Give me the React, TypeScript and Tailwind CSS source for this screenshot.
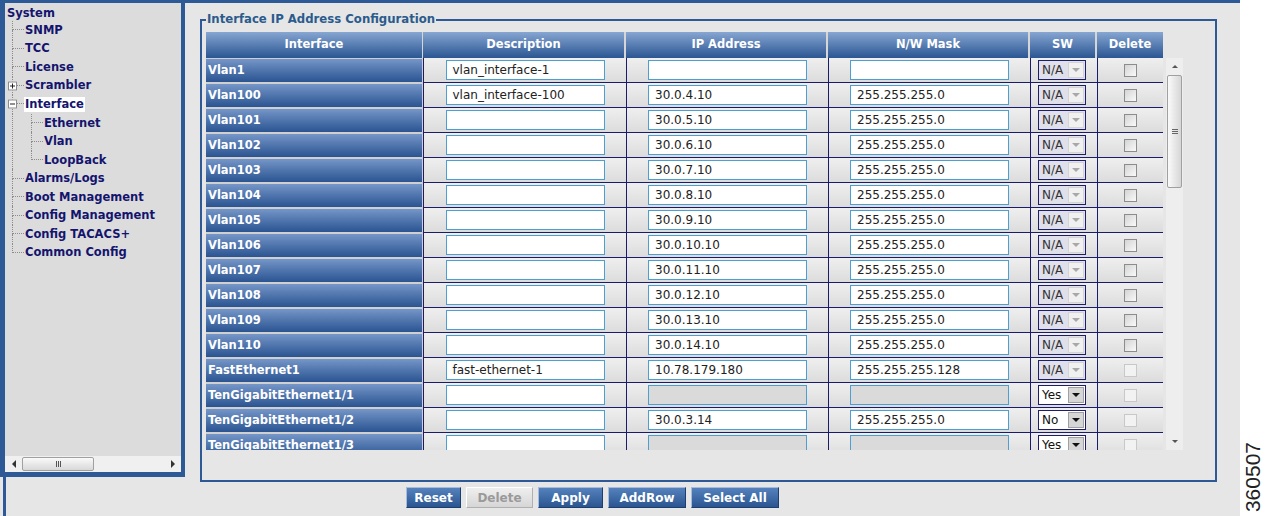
import React from 'react'

type Row = {
  name: string
  desc: string
  ip: string | null
  mask: string | null
  sw: string
  del: boolean
}

const rows: Row[] = [
  { name: 'Vlan1', desc: 'vlan_interface-1', ip: '', mask: '', sw: 'N/A', del: true },
  { name: 'Vlan100', desc: 'vlan_interface-100', ip: '30.0.4.10', mask: '255.255.255.0', sw: 'N/A', del: true },
  ...Array.from({ length: 10 }, (_, i) => ({
    name: `Vlan${101 + i}`,
    desc: '',
    ip: `30.0.${5 + i}.10`,
    mask: '255.255.255.0',
    sw: 'N/A',
    del: true,
  })),
  { name: 'FastEthernet1', desc: 'fast-ethernet-1', ip: '10.78.179.180', mask: '255.255.255.128', sw: 'N/A', del: false },
  { name: 'TenGigabitEthernet1/1', desc: '', ip: null, mask: null, sw: 'Yes', del: false },
  { name: 'TenGigabitEthernet1/2', desc: '', ip: '30.0.3.14', mask: '255.255.255.0', sw: 'No', del: false },
  { name: 'TenGigabitEthernet1/3', desc: '', ip: null, mask: null, sw: 'Yes', del: false },
]

function Connector({ last, toggle }: { last?: boolean; toggle?: '+' | '-' }) {
  return (
    <div className="relative flex w-[12px] shrink-0 flex-col">
      <div className="h-1/2 border-b border-l border-dotted border-[#8c8c8c]" />
      <div className={last ? 'h-1/2' : 'h-1/2 border-l border-dotted border-[#8c8c8c]'} />
      {toggle && (
        <span className="absolute left-[-4px] top-1/2 flex h-[9px] w-[9px] -translate-y-1/2 items-center justify-center border border-[#8c8c8c] bg-white">
          <span className="h-[1px] w-[5px] bg-[#222]" />
          {toggle === '+' && <span className="absolute h-[5px] w-[1px] bg-[#222]" />}
        </span>
      )}
    </div>
  )
}

function TreeRow({ label, last, toggle, selected }: { label: string; last?: boolean; toggle?: '+' | '-'; selected?: boolean }) {
  return (
    <div className="flex h-[18.55px]">
      <Connector last={last} toggle={toggle} />
      <div className="flex items-center">
        <span className={`px-[1px] leading-[15px] ${selected ? 'bg-white' : ''}`}>{label}</span>
      </div>
    </div>
  )
}

function Field({ value, disabled }: { value: string | null; disabled?: boolean }) {
  return (
    <div
      className={`flex h-[20px] w-[159px] items-center border border-[#4c9fd1] pl-[6px] text-[12px] text-[#222] ${
        disabled ? 'bg-[#dadada]' : 'bg-white'
      }`}
    >
      {value}
    </div>
  )
}

function Sw({ value }: { value: string }) {
  const na = value === 'N/A'
  return (
    <div className={`flex h-[20px] w-[48px] border border-[#1d1d6b] ${na ? 'bg-[#e0e0ea]' : 'bg-white'}`}>
      <span className={`flex-1 pl-[3px] text-[12px] leading-[18px] ${na ? 'text-[#333]' : 'text-[#111]'}`}>{value}</span>
      <span
        className={`my-[1px] mr-[1px] flex w-[16px] items-center justify-center border ${
          na ? 'border-[#d4d4d4] bg-[#f0f0f0]' : 'border-[#a0a0a0] bg-[#d6d6d6]'
        }`}
      >
        <span
          className={`h-0 w-0 border-x-[4px] border-t-[4px] border-x-transparent ${
            na ? 'border-t-[#a8a8a8]' : 'border-t-[#111]'
          }`}
        />
      </span>
    </div>
  )
}

function Cell({ w, children, left }: { w: string; children?: React.ReactNode; left?: boolean }) {
  return (
    <div
      className={`flex shrink-0 items-center border-b border-l border-[#1b1b6b] bg-linear-to-b from-[#efefef] to-[#dcdcdc] ${w} ${
        left ? 'justify-start pl-[7px]' : 'justify-center'
      }`}
    >
      {children}
    </div>
  )
}

const head = 'flex shrink-0 items-center justify-center bg-linear-to-b from-[#87a6d2] to-[#2a5692] font-bold text-white'

export default function App() {
  return (
    <div className="flex h-[516px] w-[1266px] overflow-hidden bg-white font-['DejaVu_Sans',Verdana,sans-serif] text-[11.5px]">
      {/* left tree column */}
      <div className="flex w-[185px] shrink-0 flex-col bg-[#e6e6e6]">
        <div className="flex h-[477px] flex-col border-b-[5px] border-l-[5px] border-r-[4px] border-t-[3px] border-[#2d5a96] bg-[#dcdcdc]">
          <div className="flex-1 pt-[4px] font-bold text-[#14146e]">
            <div className="flex h-[14px] items-center pl-[2px]">System</div>
            <div className="pl-[7px]">
              <TreeRow label="SNMP" />
              <TreeRow label="TCC" />
              <TreeRow label="License" />
              <TreeRow label="Scrambler" toggle="+" />
              <TreeRow label="Interface" toggle="-" selected />
              <div className="flex">
                <div className="w-[12px] shrink-0 border-l border-dotted border-[#8c8c8c]" />
                <div className="pl-[7px]">
                  <TreeRow label="Ethernet" />
                  <TreeRow label="Vlan" />
                  <TreeRow label="LoopBack" last />
                </div>
              </div>
              <TreeRow label="Alarms/Logs" />
              <TreeRow label="Boot Management" />
              <TreeRow label="Config Management" />
              <TreeRow label="Config TACACS+" />
              <TreeRow label="Common Config" last />
            </div>
          </div>
          {/* horizontal scrollbar */}
          <div className="flex h-[16px] items-center bg-[#f0f0f0]">
            <div className="flex w-[17px] justify-center">
              <span className="h-0 w-0 border-y-[4px] border-r-[4px] border-y-transparent border-r-[#333]" />
            </div>
            <div className="flex h-[14px] w-[72px] items-center justify-center gap-[1px] rounded-[2px] border border-[#a0a0a0] bg-linear-to-b from-[#fafafa] to-[#d8d8d8]">
              <span className="h-[6px] w-[1px] bg-[#555]" />
              <span className="h-[6px] w-[1px] bg-[#555]" />
              <span className="h-[6px] w-[1px] bg-[#555]" />
            </div>
            <div className="flex-1" />
            <div className="flex w-[17px] justify-center">
              <span className="h-0 w-0 border-y-[4px] border-l-[4px] border-y-transparent border-l-[#333]" />
            </div>
          </div>
        </div>
        <div className="ml-[3px] w-[3px] flex-1 bg-[#2d5a96]" />
      </div>

      {/* main area */}
      <div className="flex w-[1055px] shrink-0 flex-col border-t-[3px] border-[#2d5a96] bg-[#e6e6e6] pl-[15px]">
        <div className="mt-[16px] h-[463px] w-[1017px] border-2 border-[#2d5a96]">
          <div className="-mt-[9px] ml-[4px] w-fit bg-[#e6e6e6] px-[1px] text-[11.7px] font-bold leading-[14px] text-[#2b5b8c]">
            Interface IP Address Configuration
          </div>
          <div className="ml-[4px] mt-[6px]">
            {/* header */}
            <div className="flex h-[26px] w-[957px]">
              <div className={`${head} w-[217px] border-r border-[#d6d6d6]`}>Interface</div>
              <div className={`${head} w-[203px] border-r-2 border-[#d6d6d6]`}>Description</div>
              <div className={`${head} w-[202px] border-r-2 border-[#d6d6d6]`}>IP Address</div>
              <div className={`${head} w-[202px] border-r-2 border-[#d6d6d6]`}>N/W Mask</div>
              <div className={`${head} w-[67px] border-r-2 border-[#d6d6d6]`}>SW</div>
              <div className={`${head} w-[66px]`}>Delete</div>
            </div>
            {/* body + scrollbar */}
            <div className="flex">
              <div className="h-[392px] w-[957px] overflow-hidden bg-[#e6e6e6]">
                {rows.map((r) => (
                  <div key={r.name} className="flex h-[25px]">
                    <div className="w-[217px] shrink-0 bg-[#d0d0d0] pb-[1px] pr-[1px] pt-[1px]">
                      <div className="flex h-full items-center bg-linear-to-b from-[#7596c8] to-[#2a5491] pl-[2px] font-bold text-white">
                        {r.name}
                      </div>
                    </div>
                    <Cell w="w-[203px]">
                      <Field value={r.desc} />
                    </Cell>
                    <Cell w="w-[202px]">
                      <Field value={r.ip} disabled={r.ip === null} />
                    </Cell>
                    <Cell w="w-[202px]">
                      <Field value={r.mask} disabled={r.mask === null} />
                    </Cell>
                    <Cell w="w-[67px]" left>
                      <Sw value={r.sw} />
                    </Cell>
                    <Cell w="w-[66px]">
                      <div
                        className={`h-[13px] w-[13px] border ${
                          r.del
                            ? 'border-[#8c8c8c] bg-linear-to-br from-[#d4d4d4] to-[#fafafa]'
                            : 'border-[#c8c8c8] bg-[#f2f2f2]'
                        }`}
                      />
                    </Cell>
                  </div>
                ))}
              </div>
              {/* vertical scrollbar */}
              <div className="ml-[3px] flex h-[392px] w-[17px] flex-col bg-[#eeeeee]">
                <div className="flex h-[17px] items-center justify-center">
                  <span className="h-0 w-0 border-x-[3px] border-b-[3px] border-x-transparent border-b-[#555]" />
                </div>
                <div className="mx-[1px] flex h-[113px] flex-col items-center justify-center gap-[1px] rounded-[2px] border border-[#a0a0a0] bg-linear-to-r from-[#fafafa] to-[#d6d6d6]">
                  <span className="h-[1px] w-[6px] bg-[#666]" />
                  <span className="h-[1px] w-[6px] bg-[#666]" />
                  <span className="h-[1px] w-[6px] bg-[#666]" />
                </div>
                <div className="flex-1" />
                <div className="flex h-[17px] items-center justify-center">
                  <span className="h-0 w-0 border-x-[3px] border-t-[3px] border-x-transparent border-t-[#555]" />
                </div>
              </div>
            </div>
          </div>
        </div>

        {/* buttons */}
        <div className="ml-[206px] mt-[5px] flex gap-[5px] text-[12px] font-bold">
          <button className="h-[21px] w-[55px] border border-b-[#1d3f6e] border-l-[#a6bcdc] border-r-[#1d3f6e] border-t-[#a6bcdc] bg-linear-to-b from-[#5582bd] to-[#2a5590] text-white">
            Reset
          </button>
          <button className="h-[21px] w-[67px] border border-b-[#b0b0b0] border-l-white border-r-[#b0b0b0] border-t-white bg-linear-to-b from-[#efefef] to-[#d6d6d6] text-[#9a9a9a]">
            Delete
          </button>
          <button className="h-[21px] w-[65px] border border-b-[#1d3f6e] border-l-[#a6bcdc] border-r-[#1d3f6e] border-t-[#a6bcdc] bg-linear-to-b from-[#5582bd] to-[#2a5590] text-white">
            Apply
          </button>
          <button className="h-[21px] w-[78px] border border-b-[#1d3f6e] border-l-[#a6bcdc] border-r-[#1d3f6e] border-t-[#a6bcdc] bg-linear-to-b from-[#5582bd] to-[#2a5590] text-white">
            AddRow
          </button>
          <button className="h-[21px] w-[88px] border border-b-[#1d3f6e] border-l-[#a6bcdc] border-r-[#1d3f6e] border-t-[#a6bcdc] bg-linear-to-b from-[#5582bd] to-[#2a5590] text-white">
            Select All
          </button>
        </div>
      </div>

      {/* right strip with figure number */}
      <div className="flex flex-1 items-end justify-center bg-white pb-[4px]">
        <span className="rotate-180 font-['Liberation_Sans',Arial,sans-serif] text-[21px] leading-[22px] text-[#222] [writing-mode:vertical-rl]">
          360507
        </span>
      </div>
    </div>
  )
}
